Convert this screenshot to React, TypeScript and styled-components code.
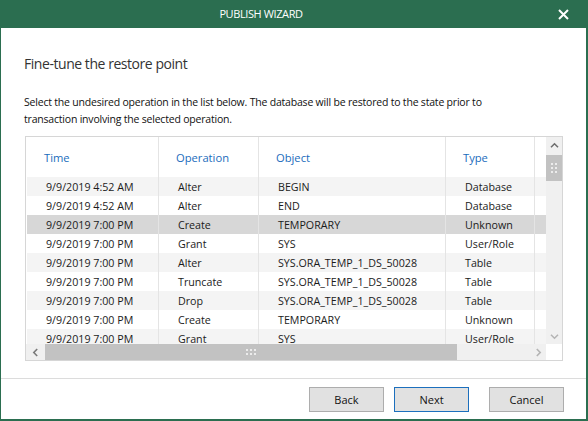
import React from "react";
import styled, { createGlobalStyle } from "styled-components";

const GREEN = "#2b6e50";
const FONT = `"Open Sans", "Noto Sans", sans-serif`;
const COLS = "132px 100px 187px 89px 1fr";

const Global = createGlobalStyle`
  html, body { margin: 0; padding: 0; background: #fff; }
  body { font-family: ${FONT}; }
  * { box-sizing: border-box; }
`;

const Window = styled.div`
  width: 588px;
  height: 421px;
  display: flex;
  flex-direction: column;
  background: #fff;
  border-left: 1px solid ${GREEN};
  border-right: 2px solid ${GREEN};
  border-bottom: 2px solid ${GREEN};
  overflow: hidden;
`;

const TitleBar = styled.div`
  height: 28px;
  flex: none;
  background: ${GREEN};
  margin: 0 -2px 0 -1px;
  display: grid;
  grid-template-columns: 1fr 66px;
  align-items: center;
`;

const Title = styled.div`
  text-align: center;
  color: #fff;
  font-size: 11px;
  letter-spacing: -0.4px;
  line-height: 28px;
`;

const CloseButton = styled.button`
  height: 28px;
  border: 0;
  padding: 0 19px 0 0;
  background: transparent;
  display: flex;
  align-items: center;
  justify-content: flex-end;
  cursor: pointer;
`;

const Body = styled.div`
  flex: 1;
  padding: 24px 24px 0 23px;
  display: flex;
  flex-direction: column;
`;

const Heading = styled.h1`
  margin: 0;
  font-size: 14px;
  font-weight: 400;
  letter-spacing: -0.45px;
  color: #333;
  line-height: 24px;
`;

const Description = styled.p`
  margin: 18px 0 0;
  max-width: 480px;
  font-size: 10.5px;
  letter-spacing: -0.2px;
  line-height: 17px;
  color: #111;
`;

const ListBox = styled.div`
  margin: 8px 0 0 1px;
  width: 538px;
  height: 225px;
  border: 1px solid #d6d6d6;
  display: grid;
  grid-template-columns: 1fr 16px;
  grid-template-rows: 1fr 16px;
  overflow: hidden;
`;

const Viewport = styled.div`
  overflow: hidden;
  padding-left: 1px;
  font-size: 10.7px;
`;

const HeaderRow = styled.div`
  display: grid;
  grid-template-columns: ${COLS};
  height: 40px;
`;

const HeaderCell = styled.div<{ $last?: boolean }>`
  display: flex;
  align-items: center;
  padding-left: 17px;
  color: #1a6cbc;
  font-size: 11.2px;
  border-right: ${(p) => (p.$last ? "none" : "1px solid #e4e4e4")};
`;

const Row = styled.div<{ $shade: "white" | "stripe" | "selected" }>`
  display: grid;
  grid-template-columns: ${COLS};
  height: 19px;
  background: ${(p) =>
    p.$shade === "selected" ? "#d7d7d7" : p.$shade === "stripe" ? "#f4f4f4" : "#fff"};
`;

const Cell = styled.div<{ $last?: boolean }>`
  display: flex;
  align-items: center;
  padding-left: 19px;
  color: #1b1b1b;
  white-space: nowrap;
  overflow: hidden;
  border-right: ${(p) => (p.$last ? "none" : "1px solid #e4e4e4")};
`;

const VScroll = styled.div`
  background: #f0f0f0;
  display: flex;
  flex-direction: column;
  align-items: center;
`;

const HScroll = styled.div`
  background: #f0f0f0;
  display: flex;
  align-items: center;
`;

const Corner = styled.div`
  background: #fff;
`;

const ArrowBox = styled.div<{ $size: number }>`
  flex: none;
  width: ${(p) => p.$size}px;
  height: ${(p) => p.$size}px;
  display: flex;
  align-items: center;
  justify-content: center;
`;

const VThumb = styled.div`
  width: 16px;
  height: 26px;
  margin-top: 2px;
  background: #c2c2c2;
  display: grid;
  grid-template-columns: repeat(2, 2px);
  grid-auto-rows: 2px;
  gap: 2px;
  justify-content: center;
  align-content: center;
`;

const HThumb = styled.div`
  width: 412px;
  height: 16px;
  background: #c2c2c2;
  display: grid;
  grid-template-columns: repeat(3, 2px);
  grid-auto-rows: 2px;
  gap: 2px;
  justify-content: center;
  align-content: center;
`;

const Dot = styled.span`
  background: #ececec;
`;

const Spacer = styled.div`
  flex: 1;
`;

const Footer = styled.div`
  flex: none;
  height: 41px;
  border-top: 1px solid #dcdcdc;
  display: flex;
  justify-content: flex-end;
  align-items: flex-start;
  gap: 10px;
  padding: 8px 22px 0 0;
`;

const Button = styled.button<{ $primary?: boolean; $apart?: boolean }>`
  width: 75px;
  height: 25px;
  margin-left: ${(p) => (p.$apart ? "10px" : "0")};
  font-family: ${FONT};
  font-size: 11px;
  color: #111;
  background: #e1e1e1;
  border: 1px solid ${(p) => (p.$primary ? "#1c6fbd" : "#adadad")};
  padding: 0;
  cursor: pointer;
`;

type Op = { time: string; op: string; obj: string; type: string };

const ops: Op[] = [
  { time: "9/9/2019 4:52 AM", op: "Alter", obj: "BEGIN", type: "Database" },
  { time: "9/9/2019 4:52 AM", op: "Alter", obj: "END", type: "Database" },
  { time: "9/9/2019 7:00 PM", op: "Create", obj: "TEMPORARY", type: "Unknown" },
  { time: "9/9/2019 7:00 PM", op: "Grant", obj: "SYS", type: "User/Role" },
  { time: "9/9/2019 7:00 PM", op: "Alter", obj: "SYS.ORA_TEMP_1_DS_50028", type: "Table" },
  { time: "9/9/2019 7:00 PM", op: "Truncate", obj: "SYS.ORA_TEMP_1_DS_50028", type: "Table" },
  { time: "9/9/2019 7:00 PM", op: "Drop", obj: "SYS.ORA_TEMP_1_DS_50028", type: "Table" },
  { time: "9/9/2019 7:00 PM", op: "Create", obj: "TEMPORARY", type: "Unknown" },
  { time: "9/9/2019 7:00 PM", op: "Grant", obj: "SYS", type: "User/Role" },
];

const SELECTED = 2;

const Chevron = ({ dir, color }: { dir: "up" | "down" | "left" | "right"; color: string }) => {
  const rot = { up: 0, right: 90, down: 180, left: 270 }[dir];
  return (
    <svg width="9" height="9" viewBox="0 0 9 9">
      <path
        d="M1 6.2 L4.5 2.8 L8 6.2"
        fill="none"
        stroke={color}
        strokeWidth="1.6"
        transform={`rotate(${rot} 4.5 4.5)`}
      />
    </svg>
  );
};

const CloseIcon = () => (
  <svg width="11" height="11" viewBox="0 0 11 11">
    <path d="M1 1 L10 10 M10 1 L1 10" stroke="#fff" strokeWidth="2" />
  </svg>
);

export default function App() {
  return (
    <>
      <Global />
      <Window>
        <TitleBar>
          <Title>PUBLISH WIZARD</Title>
          <CloseButton aria-label="Close">
            <CloseIcon />
          </CloseButton>
        </TitleBar>
        <Body>
          <Heading>Fine-tune the restore point</Heading>
          <Description>
            Select the undesired operation in the list below. The database will be restored to the state prior to
            transaction involving the selected operation.
          </Description>
          <ListBox>
            <Viewport>
              <HeaderRow>
                <HeaderCell>Time</HeaderCell>
                <HeaderCell>Operation</HeaderCell>
                <HeaderCell>Object</HeaderCell>
                <HeaderCell>Type</HeaderCell>
                <HeaderCell $last />
              </HeaderRow>
              {ops.map((r, i) => (
                <Row
                  key={i}
                  $shade={i === SELECTED ? "selected" : i % 2 === 0 ? "stripe" : "white"}
                >
                  <Cell>{r.time}</Cell>
                  <Cell>{r.op}</Cell>
                  <Cell>{r.obj}</Cell>
                  <Cell>{r.type}</Cell>
                  <Cell $last />
                </Row>
              ))}
            </Viewport>
            <VScroll>
              <ArrowBox $size={16}>
                <Chevron dir="up" color="#6e6e6e" />
              </ArrowBox>
              <VThumb>
                {Array.from({ length: 6 }, (_, i) => (
                  <Dot key={i} />
                ))}
              </VThumb>
              <Spacer />
              <ArrowBox $size={16}>
                <Chevron dir="down" color="#b4b4b4" />
              </ArrowBox>
            </VScroll>
            <HScroll>
              <ArrowBox $size={19}>
                <Chevron dir="left" color="#7a7a7a" />
              </ArrowBox>
              <HThumb>
                {Array.from({ length: 6 }, (_, i) => (
                  <Dot key={i} />
                ))}
              </HThumb>
              <Spacer />
              <ArrowBox $size={16}>
                <Chevron dir="right" color="#b4b4b4" />
              </ArrowBox>
            </HScroll>
            <Corner />
          </ListBox>
          <Spacer />
        </Body>
        <Footer>
          <Button>Back</Button>
          <Button $primary>Next</Button>
          <Button $apart>Cancel</Button>
        </Footer>
      </Window>
    </>
  );
}
